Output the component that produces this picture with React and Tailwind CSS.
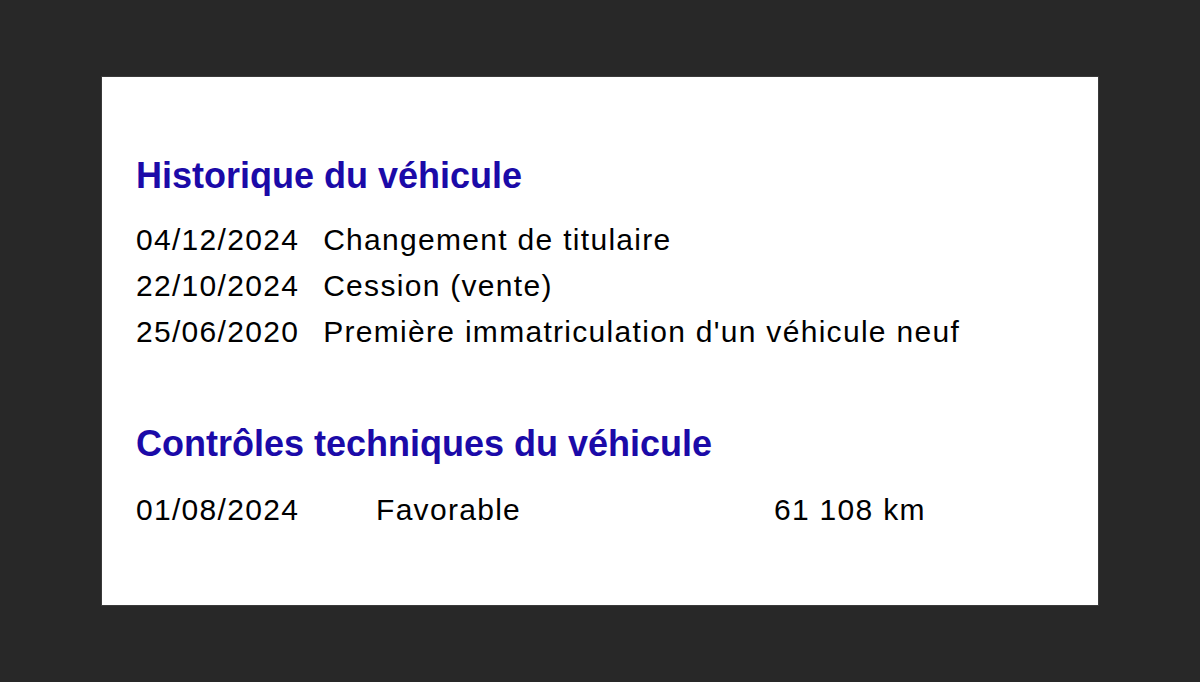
export default function App() {
  const history = [
    { date: '04/12/2024', label: 'Changement de titulaire' },
    { date: '22/10/2024', label: 'Cession (vente)' },
    { date: '25/06/2020', label: "Première immatriculation d'un véhicule neuf" },
  ];

  const controls = [{ date: '01/08/2024', result: 'Favorable', km: '61 108 km' }];

  return (
    <div className="min-h-[682px] w-full bg-[#282828] flex items-center justify-center font-['Liberation_Sans',Arial,sans-serif]">
      <div className="w-[998px] h-[530px] bg-white border border-[#3a3a3a] pl-[34px] pt-[77px]">
        {/* Historique */}
        <h2 className="text-[36px] leading-[43px] font-bold text-[#1b0aa8]">Historique du véhicule</h2>
        <div className="mt-[20px] text-[30px] leading-[46px] tracking-[1.3px] text-black">
          {history.map((row) => (
            <div key={row.date} className="flex gap-[24px]">
              <span>{row.date}</span>
              <span>{row.label}</span>
            </div>
          ))}
        </div>

        {/* Contrôles techniques */}
        <h2 className="mt-[67px] text-[36px] leading-[43px] font-bold text-[#1b0aa8]">
          Contrôles techniques du véhicule
        </h2>
        <div className="mt-[22px] text-[30px] leading-[46px] tracking-[1.3px] text-black">
          {controls.map((row) => (
            <div key={row.date} className="flex">
              <span className="w-[240px]">{row.date}</span>
              <span className="w-[398px]">{row.result}</span>
              <span>{row.km}</span>
            </div>
          ))}
        </div>
      </div>
    </div>
  );
}
